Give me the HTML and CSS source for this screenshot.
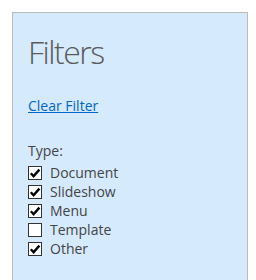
FILE: index.html
```html
<!DOCTYPE html>
<html lang="en">
<head>
    <meta charset="UTF-8">
    <title>Filters</title>
    <link rel="stylesheet" href="styles.css">
</head>
<body>
    <div class="filter-panel">
        <h1 class="filter-title">Filters</h1>
        <a href="#" class="clear-link">Clear Filter</a>

        <div class="type-group">
            <div class="group-label">Type:</div>
            <label class="check-row"><span class="box checked"><svg viewBox="0 0 12 12"><path d="M1.8 6.2 L4.6 9.2 L10.4 2.6"/></svg></span>Document</label>
            <label class="check-row"><span class="box checked"><svg viewBox="0 0 12 12"><path d="M1.8 6.2 L4.6 9.2 L10.4 2.6"/></svg></span>Slideshow</label>
            <label class="check-row"><span class="box checked"><svg viewBox="0 0 12 12"><path d="M1.8 6.2 L4.6 9.2 L10.4 2.6"/></svg></span>Menu</label>
            <label class="check-row"><span class="box"></span>Template</label>
            <label class="check-row"><span class="box checked"><svg viewBox="0 0 12 12"><path d="M1.8 6.2 L4.6 9.2 L10.4 2.6"/></svg></span>Other</label>
        </div>
    </div>
</body>
</html>
```

FILE: styles.css
```css
body {
    margin: 0;
    font-family: "Open Sans", "Noto Sans", sans-serif;
    background: #fff;
}
.filter-panel {
    margin: 12px 0 0 12px;
    width: 236px;
    min-height: 300px;
    box-sizing: border-box;
    padding: 20px 15px;
    background: #d5eafd;
    border: 1px solid #bbbbbb;
}
.filter-title {
    margin: 0;
    font-size: 32px;
    font-weight: 300;
    letter-spacing: -1.5px;
    line-height: 38px;
    color: #5a5a5a;
}
.clear-link {
    display: inline-block;
    margin-top: 25px;
    font-size: 14px;
    color: #0066cc;
}
.type-group {
    margin-top: 25px;
    font-size: 14px;
    color: #444;
}
.group-label {
    line-height: 19px;
    margin-bottom: 3px;
}
.check-row {
    display: flex;
    align-items: center;
    gap: 8px;
    height: 19px;
}
.box {
    width: 14px;
    height: 14px;
    box-sizing: border-box;
    border: 1px solid #333;
    background: #fff;
    display: flex;
    align-items: center;
    justify-content: center;
}
.box svg {
    width: 12px;
    height: 12px;
    fill: none;
    stroke: #000;
    stroke-width: 2.4;
}
```
